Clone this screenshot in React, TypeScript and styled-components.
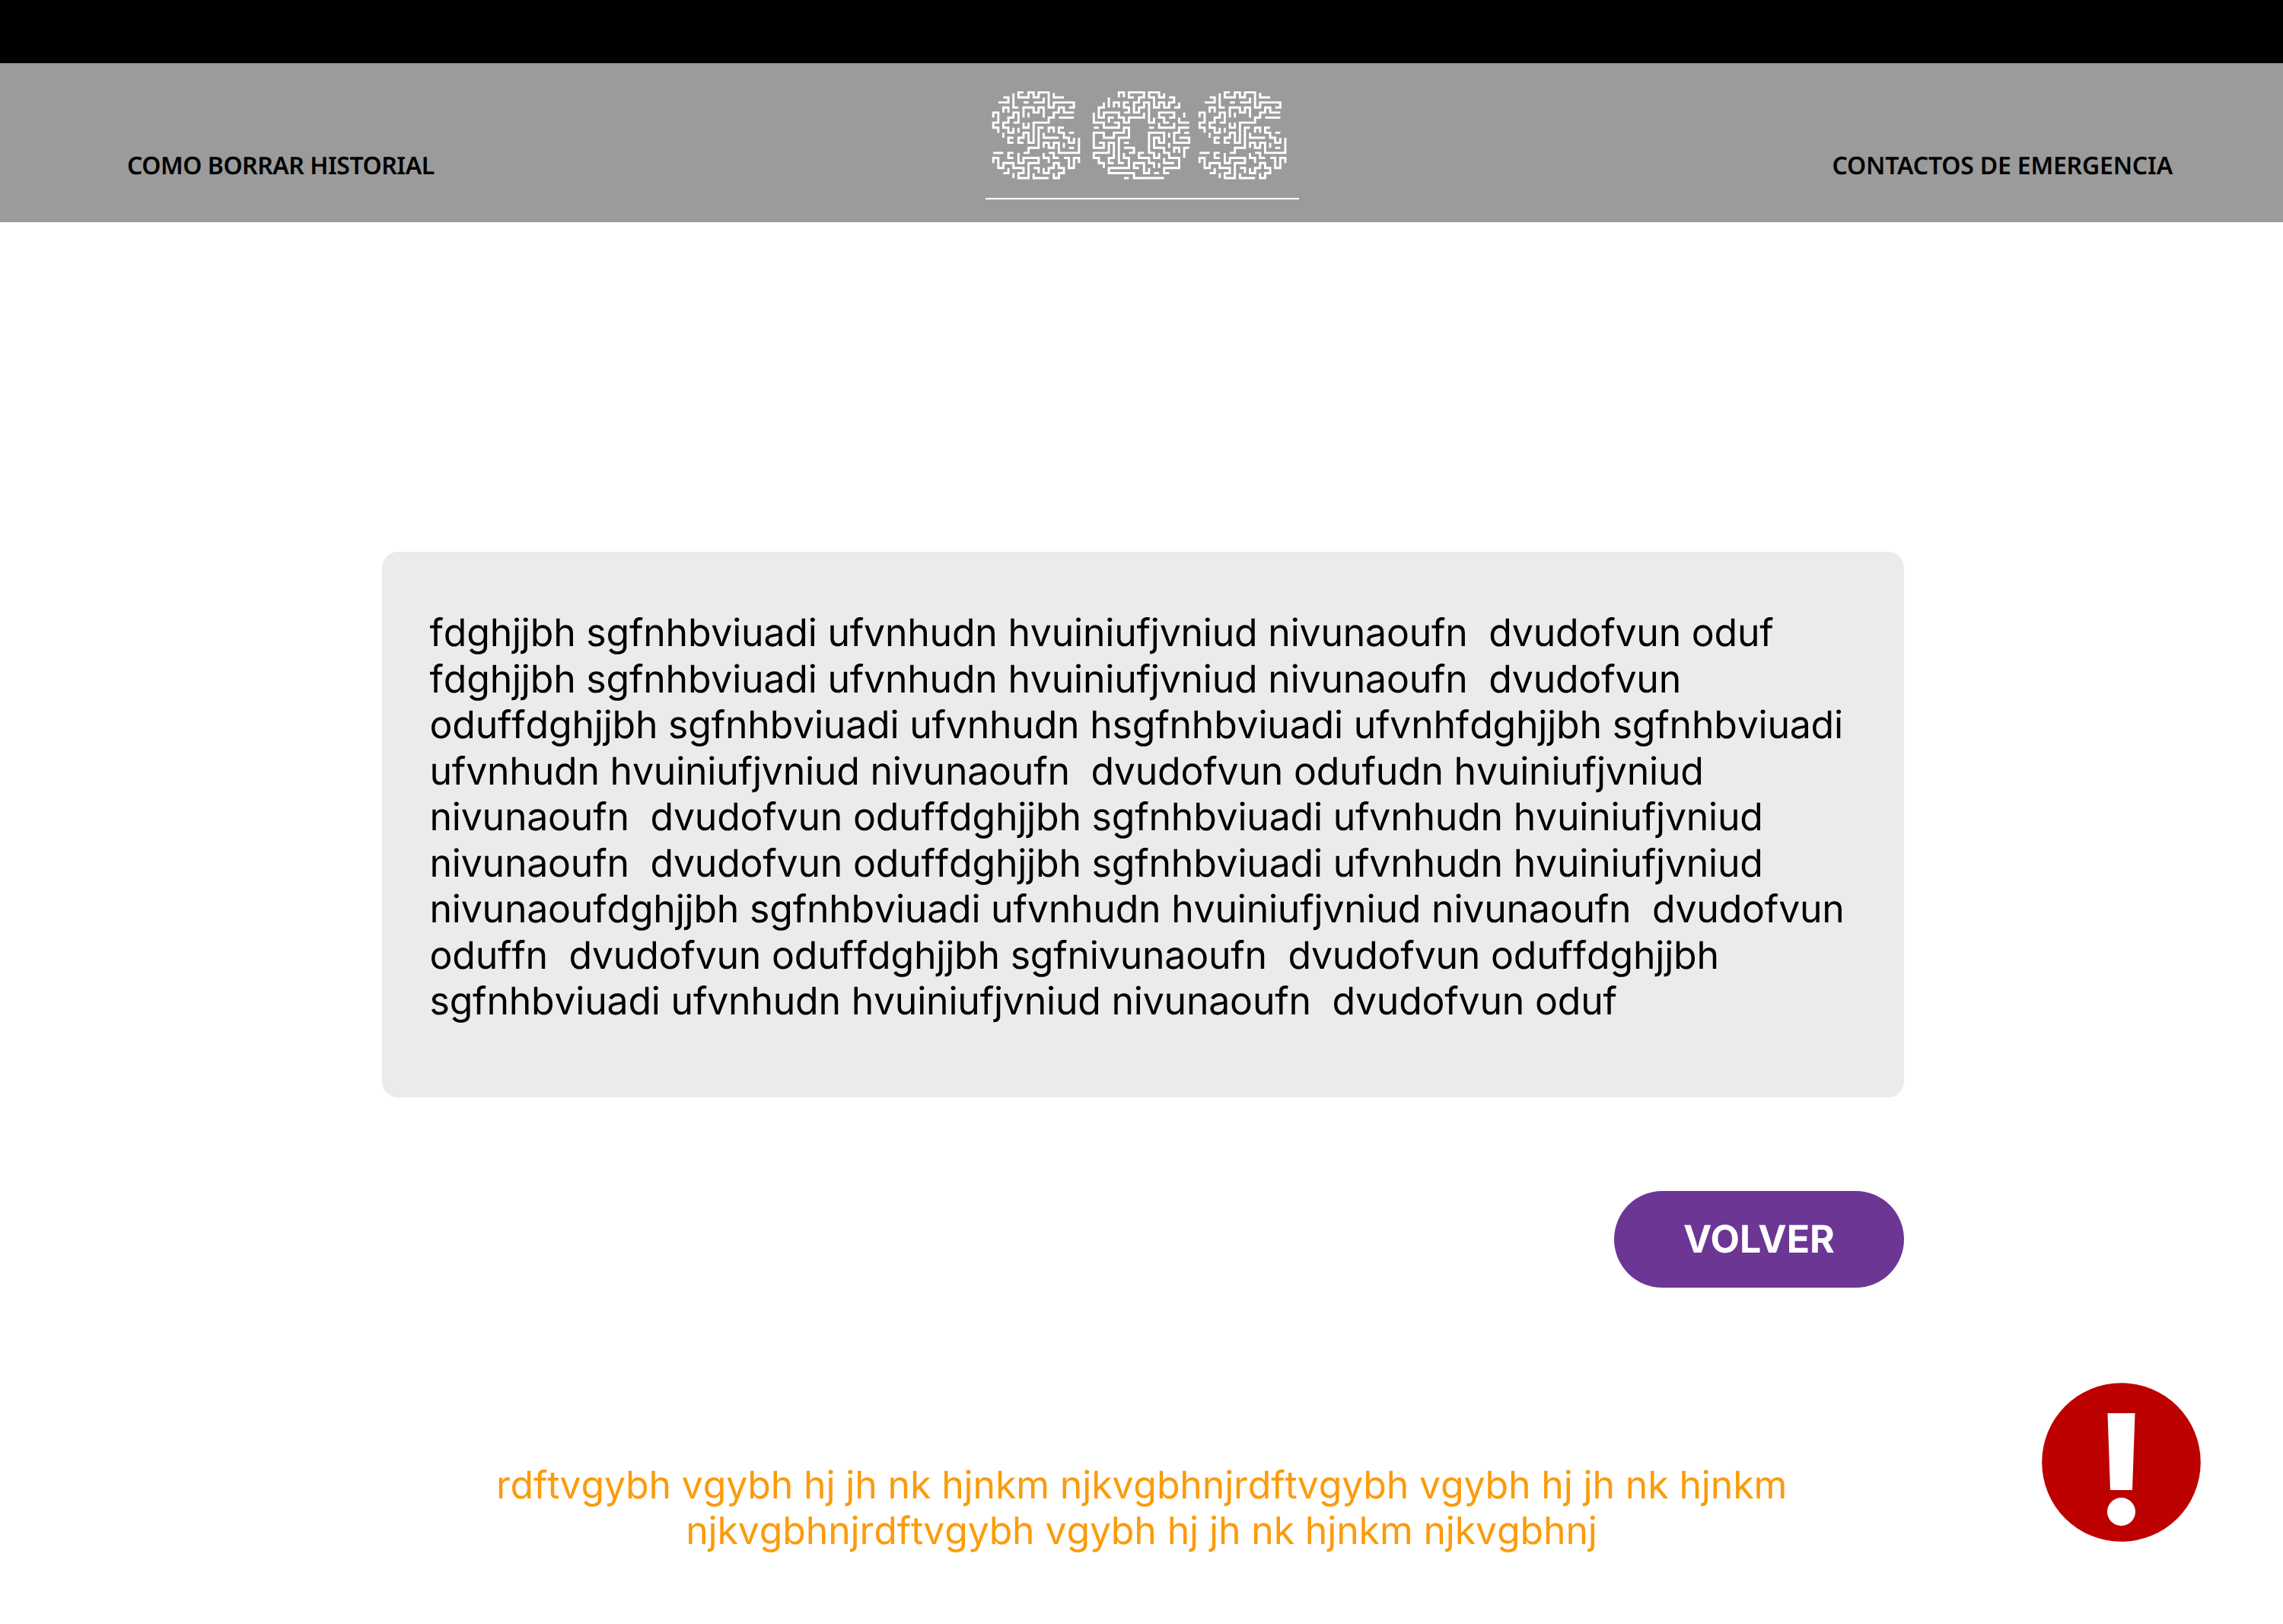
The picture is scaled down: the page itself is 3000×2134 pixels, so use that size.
import React from "react";
import styled, { createGlobalStyle } from "styled-components";

type Pt = [number, number];

const S_LINES = [
  "6,0 5,0 5,1 7,1 7,0 8,0 8,1 9,1 9,0 11,0 11,3 12,3 12,2 16,2 16,3 15,3",
  "4,0.2 4,3 5,3", "12,0.1 12,1 14,1", "2,1 3,1 3,2 1,2", "6,2 7,2", "8,2 10,2 10,1",
  "2,4 2,3 3,3 3,4", "6,5 6,3 8,3 8,4 9,4 9,3 10,3 10,5", "7,4 7,5",
  "0,5 0,4 1,4 1,6 0,6 0,7 1,7 1,8",
  "4,6 5,6 5,4 4,4 4,5 3,5 3,6 2,6 2,7 3,7 3,8 4,8 4,7",
  "16,4 14,4 14,3 13,3 13,4 12,4 12,5 11,5 11,6 8,6 8,10 7,10 7,8 6,8 6,9 5,9 5,10 6,10",
  "13,5 16,5", "6,6 6,7 7,7 7,6", "5,7 5,8", "10,7 9,7 9,11 7,11 7,12 6,12",
  "11,8 11,7 12,7 12,8", "14,7 13,7 13,8 14,8 14,9 15,9 15,10 16,10 16,9", "15,8 16,8",
  "2,8 2,9", "4,9 3,9 3,10 4,10", "10,8 10,9 13,9",
  "10,11 10,10 11,10 11,11 12,11 12,10 13,10 13,12 17,12 17,9", "14,10 14,11", "15,11 16,11",
  "0,12 2,12", "4,12 3,12 3,13 4,13",
  "5,12 5,14 6,14 6,13 9,13 9,14 7,14 7,17 5,17 5,16 6,16 6,15 4,15 4,14 2,14 2,15 1,15 1,13 0,13 0,14",
  "10,12 10,13 11,13 11,14", "11,12 12,12 12,13 13,13", "2,16 3,16 3,15", "4,16 4,17",
  "8,15 9,15 9,16", "8,16 8,17 11,17",
  "10,15 10,16 11,16 11,15 12,15 12,14 13,14 13,15 14,15 14,16 13,16 13,17 12,17 12,16",
  "17,14 17,13 16,13 16,15 15,15 15,13 14,13",
];

const O_LINES = [
  "5,1 5,0 6,0 6,1",
  "8,1 7,1 7,0 10,0 10,1 9,1 9,2 8,2 8,4 9,4 9,3 10,3 10,2 11,2 11,6 12,6 12,5",
  "3,1 3,3", "2,2 2,3 1,3 1,5 2,5 2,4 5,4 5,5 6,5 6,6 7,6 7,5 10,5 10,4",
  "4,3 4,2 5,2 5,3", "7,2 6,2 6,3 7,3 7,4 6,4",
  "14,0.2 14,1 13,1 13,0 11,0 11,1 12,1 12,3 13,3 13,2 14,2 14,3 15,3 15,2 16,2 16,1 15,1",
  "17,2 17,3 16,3", "0,4 0,6 2,6 2,7 5,7 5,6 4,6", "4,5 3,5 3,6", "0,7 1,7", "18,4 18,5",
  "15,6 14,6 14,5 13,5 13,4 16,4 16,5 15,5", "17,5 17,6 19,6", "13,6 13,7 16,7 16,6", "11,7 12,7",
  "19,7 17,7 17,8 16,8 16,10 19,10 19,9 17,9", "18,8 19,8",
  "1,10 2,10 2,11 0,11 0,8 2,8 2,9 4,9 4,8 6,8 6,7 7,7 7,9 5,9 5,14 6,14",
  "6,10 7,10", "6,11 8,11 8,12 7,12",
  "4,14 3,14 3,13 4,13 4,10 3,10 3,12 0,12 0,13 1,13 1,14 2,14 2,15",
  "6,12 6,13 7,13 7,15 3,15 3,16 8,16 8,17 14,17", "6,17 7,17",
  "9,15 8,15 8,14 10,14 10,16 11,16 11,15", "10,12 9,12 9,13 11,13 11,14 12,14 12,15",
  "13,12 13,13 12,13 12,12 11,12 11,8 14,8 14,10 13,10 13,9 12,9 12,11 14,11 14,12 15,12 15,13 17,13 17,15 14,15 14,16 15,16",
  "15,8 15,9", "15,10 15,11", "16,12 16,11 17,11 17,12", "18,13 18,11 19,11",
  "14,13 14,14 16,14", "13,14 13,15", "12,16 13,16",
];

const Global = createGlobalStyle`
  * { box-sizing: border-box; }
  body { margin: 0; background: #fff; text-rendering: geometricPrecision; }
`;

const Page = styled.div`
  width: 3000px;
  height: 2134px;
  display: flex;
  flex-direction: column;
  background: #fff;
  font-family: Inter, "Liberation Sans", sans-serif;
  overflow: hidden;
`;

const TopBar = styled.div`
  height: 83px;
  flex: none;
  background: #000;
`;

const Header = styled.header`
  height: 209px;
  flex: none;
  display: grid;
  grid-template-columns: 1fr 412px 1fr;
  padding: 0 145px 0 167px;
  background: #9b9b9b;
`;

const NavLink = styled.a<{ $end?: boolean; $spacing: number }>`
  justify-self: ${(p) => (p.$end ? "end" : "start")};
  margin-top: 112px;
  font: 600 32px/45px "Noto Sans", "Open Sans", sans-serif;
  letter-spacing: ${(p) => p.$spacing}px;
  color: #000;
  white-space: nowrap;
`;

const Logo = styled.svg`
  display: block;
  width: 412px;
  height: 208px;
  margin-left: -10px;
`;

const Main = styled.main`
  width: 2000px;
  margin: 433px 0 0 502px;
  display: flex;
  flex-direction: column;
  align-items: flex-end;
`;

const Card = styled.section`
  width: 2000px;
  height: 717px;
  padding: 77.3px 62.5px;
  border-radius: 21px;
  background: #ebebeb;
`;

const Copy = styled.p<{ $color: string; $spacing: number; $centered?: boolean }>`
  margin: 0;
  font-size: 50px;
  line-height: 60.5px;
  letter-spacing: ${(p) => p.$spacing}px;
  font-optical-sizing: none;
  font-variation-settings: "opsz" 14;
  font-feature-settings: "liga" 0, "calt" 0, "kern" 0;
  white-space: pre;
  color: ${(p) => p.$color};
  text-align: ${(p) => (p.$centered ? "center" : "left")};
`;

const BackButton = styled.button`
  width: 381px;
  height: 127px;
  margin-top: 123px;
  padding: 0;
  border: 0;
  border-radius: 64px;
  background: #6c3695;
  color: #fff;
  font: 700 50px/60px Inter, "Liberation Sans", sans-serif;
  text-rendering: geometricPrecision;
`;

const Footer = styled.footer`
  display: grid;
  grid-template-columns: 1fr auto 1fr;
  padding: 125px 108px 0;
`;

const FooterText = styled.div`
  grid-column: 2;
  margin-top: 104.7px;
`;

const AlertIcon = styled.svg`
  justify-self: end;
  width: 209px;
  height: 209px;
`;

const BODY = [
  "fdghjjbh sgfnhbviuadi ufvnhudn hvuiniufjvniud nivunaoufn  dvudofvun oduf",
  "fdghjjbh sgfnhbviuadi ufvnhudn hvuiniufjvniud nivunaoufn  dvudofvun",
  "oduffdghjjbh sgfnhbviuadi ufvnhudn hsgfnhbviuadi ufvnhfdghjjbh sgfnhbviuadi",
  "ufvnhudn hvuiniufjvniud nivunaoufn  dvudofvun odufudn hvuiniufjvniud",
  "nivunaoufn  dvudofvun oduffdghjjbh sgfnhbviuadi ufvnhudn hvuiniufjvniud",
  "nivunaoufn  dvudofvun oduffdghjjbh sgfnhbviuadi ufvnhudn hvuiniufjvniud",
  "nivunaoufdghjjbh sgfnhbviuadi ufvnhudn hvuiniufjvniud nivunaoufn  dvudofvun",
  "oduffn  dvudofvun oduffdghjjbh sgfnivunaoufn  dvudofvun oduffdghjjbh",
  "sgfnhbviuadi ufvnhudn hvuiniufjvniud nivunaoufn  dvudofvun oduf",
].join("\n");

const NOTE = [
  "rdftvgybh vgybh hj jh nk hjnkm njkvgbhnjrdftvgybh vgybh hj jh nk hjnkm",
  "njkvgbhnjrdftvgybh vgybh hj jh nk hjnkm njkvgbhnj",
].join("\n");

function Maze({ lines, x, y, pitch }: { lines: string[]; x: number; y: number; pitch: number }) {
  const toPoints = (line: string) =>
    line
      .split(" ")
      .map((p) => p.split(",").map(Number) as Pt)
      .map(([c, r]) => `${(x + c * pitch).toFixed(2)},${(y + r * 6.627).toFixed(2)}`)
      .join(" ");
  return (
    <>
      {lines.map((l, i) => (
        <polyline key={i} points={toPoints(l)} />
      ))}
    </>
  );
}

export default function App() {
  return (
    <Page>
      <Global />
      <TopBar />
      <Header>
        <NavLink $spacing={-0.48}>COMO BORRAR HISTORIAL</NavLink>
        <Logo viewBox="1295 83 412 208">
          <g fill="none" stroke="#fff" strokeWidth="2.9" strokeLinejoin="miter">
            <Maze lines={S_LINES} x={1305.2} y={121.4} pitch={6.627} />
            <Maze lines={O_LINES} x={1437.3} y={121.4} pitch={6.6} />
            <Maze lines={S_LINES} x={1576.3} y={121.4} pitch={6.627} />
          </g>
          <rect x="1295" y="260" width="412" height="2.2" fill="#fff" />
        </Logo>
        <NavLink $end $spacing={-0.2}>CONTACTOS DE EMERGENCIA</NavLink>
      </Header>
      <Main>
        <Card>
          <Copy $color="#000" $spacing={-0.22}>{BODY}</Copy>
        </Card>
        <BackButton>VOLVER</BackButton>
      </Main>
      <Footer>
        <FooterText>
          <Copy $color="#fb9b0c" $spacing={-0.15} $centered>{NOTE}</Copy>
        </FooterText>
        <AlertIcon viewBox="0 0 209 209">
          <circle cx="104.5" cy="104.5" r="104.3" fill="#bd0000" />
          <path d="M86.5 40H122.5L119 141H90Z" fill="#fff" />
          <circle cx="104.5" cy="169.5" r="18.5" fill="#fff" />
        </AlertIcon>
      </Footer>
    </Page>
  );
}
